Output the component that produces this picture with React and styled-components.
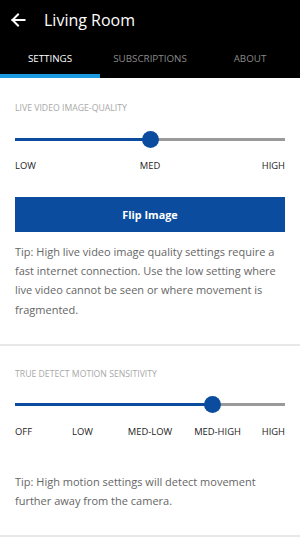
import React from "react";
import styled, { createGlobalStyle } from "styled-components";

const Global = createGlobalStyle`
  html, body { margin: 0; padding: 0; background: #fff; }
  body { font-family: "Open Sans", "Lato", Arial, sans-serif; }
  * { box-sizing: border-box; }
`;

const Page = styled.div`
  width: 300px;
  height: 547px;
  overflow: hidden;
  background: #fff;
`;

const Header = styled.header`
  background: #000;
  height: 78px;
  display: flex;
  flex-direction: column;
`;

const TitleRow = styled.div`
  height: 40px;
  display: flex;
  align-items: center;
  padding-left: 10px;
  gap: 18px;
`;

const BackButton = styled.button`
  background: none;
  border: 0;
  padding: 0;
  width: 16px;
  height: 16px;
  display: flex;
  color: #fff;
`;

const Title = styled.h1`
  margin: 0;
  font-size: 16px;
  font-weight: 400;
  color: #fff;
`;

const Tabs = styled.nav`
  flex: 1;
  display: grid;
  grid-template-columns: repeat(3, 100px);
`;

const Tab = styled.div`
  display: flex;
  align-items: center;
  justify-content: center;
  font-size: 9.8px;
  color: ${(p) => (p.$active ? "#fff" : "#8a8a8a")};
  border-bottom: 4px solid ${(p) => (p.$active ? "#1a9be0" : "transparent")};
  padding-top: 2px;
`;

const Section = styled.section`
  padding: 0 15px;
  border-bottom: 2px solid #e8e8e8;
  padding-bottom: ${(p) => p.$pb}px;
`;

const SectionLabel = styled.div`
  font-size: 8.7px;
  color: #a8a8a8;
  text-transform: uppercase;
  height: 12px;
  line-height: 12px;
  margin-top: ${(p) => p.$mt}px;
`;

const Track = styled.div`
  position: relative;
  height: 16px;
  margin-top: ${(p) => p.$mt}px;
  display: flex;
  align-items: center;
`;

const Rail = styled.div`
  flex: 1;
  height: 3px;
  background: #9a9a9a;
  display: flex;
`;

const Fill = styled.div`
  height: 100%;
  background: #0b4c9e;
`;

const Thumb = styled.div`
  position: absolute;
  top: -0.5px;
  width: 17px;
  height: 17px;
  margin-left: -8.5px;
  border-radius: 50%;
  background: #0b4c9e;
`;

const Scale = styled.div`
  display: flex;
  justify-content: space-between;
  margin-top: ${(p) => p.$mt}px;
  height: 12px;
`;

const ScaleMark = styled.span`
  width: 0;
  display: flex;
  justify-content: ${(p) => p.$align};
  white-space: nowrap;
  font-size: 9.4px;
  line-height: 12px;
  color: #222;
`;

const PrimaryButton = styled.button`
  display: block;
  width: 100%;
  height: 35px;
  margin-top: 25px;
  border: 0;
  background: #0b4c9e;
  color: #fff;
  font-family: inherit;
  font-size: 10.8px;
  font-weight: 700;
`;

const Tip = styled.p`
  margin: ${(p) => p.$mt}px 0 0;
  font-size: 11px;
  line-height: 19.2px;
  color: #666;
`;

function Slider({ value, mt }) {
  return (
    <Track $mt={mt}>
      <Rail>
        <Fill style={{ width: `${value * 100}%` }} />
      </Rail>
      <Thumb style={{ left: `${value * 100}%` }} />
    </Track>
  );
}

function ScaleLabels({ labels, mt }) {
  return (
    <Scale $mt={mt}>
      {labels.map((l, i) => (
        <ScaleMark
          key={l}
          $align={i === 0 ? "flex-start" : i === labels.length - 1 ? "flex-end" : "center"}
        >
          {l}
        </ScaleMark>
      ))}
    </Scale>
  );
}

export default function App() {
  return (
    <Page>
      <Global />
      <Header>
        <TitleRow>
          <BackButton aria-label="Back">
            <svg width="16" height="16" viewBox="0 0 16 16" fill="none" stroke="#fff" strokeWidth="2" strokeLinecap="square">
              <path d="M2.5 8h12" />
              <path d="M8 2.5L2.5 8 8 13.5" strokeLinejoin="miter" />
            </svg>
          </BackButton>
          <Title>Living Room</Title>
        </TitleRow>
        <Tabs>
          <Tab $active>SETTINGS</Tab>
          <Tab>SUBSCRIPTIONS</Tab>
          <Tab>ABOUT</Tab>
        </Tabs>
      </Header>

      <Section $pb={25}>
        <SectionLabel $mt={24}>Live video image-quality</SectionLabel>
        <Slider value={0.5} mt={17} />
        <ScaleLabels labels={["LOW", "MED", "HIGH"]} mt={13} />
        <PrimaryButton>Flip Image</PrimaryButton>
        <Tip $mt={10}>
          Tip: High live video image quality settings require a fast internet connection. Use the
          low setting where live video cannot be seen or where movement is fragmented.
        </Tip>
      </Section>

      <Section $pb={25}>
        <SectionLabel $mt={22}>True detect motion sensitivity</SectionLabel>
        <Slider value={0.733} mt={17} />
        <ScaleLabels labels={["OFF", "LOW", "MED-LOW", "MED-HIGH", "HIGH"]} mt={13} />
        <Tip $mt={34}>
          Tip: High motion settings will detect movement further away from the camera.
        </Tip>
      </Section>
    </Page>
  );
}
